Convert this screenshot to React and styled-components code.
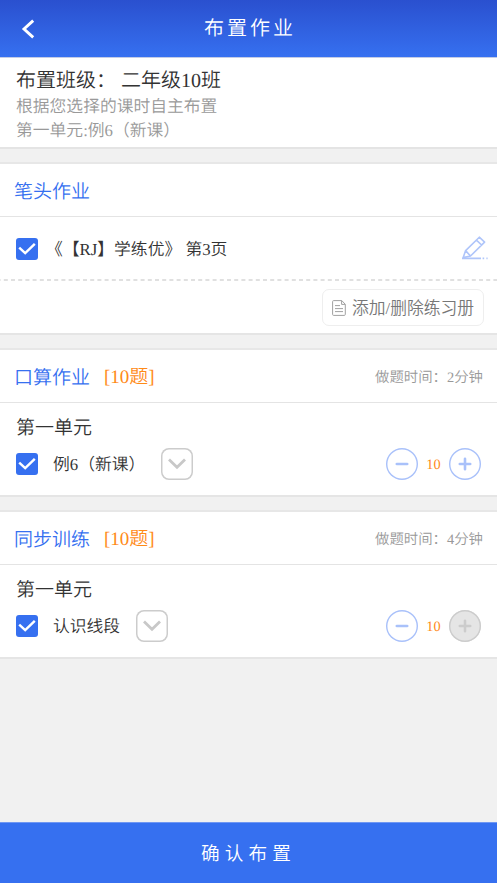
import styled, { createGlobalStyle } from "styled-components"
import { useState } from "react"

const exercises = [
    { title: "口算作业", minutes: 2, unit: "第一单元", lesson: "例6（新课）", count: 10, gap: 16 },
    { title: "同步训练", minutes: 4, unit: "第一单元", lesson: "认识线段", count: 10, gap: 16, full: true }
]

function Check(){
    const [ checked, setChecked ] = useState(true)

    return (
        <CheckBox $checked={checked} onClick={() => setChecked(!checked)}>
            {checked && <svg width="22" height="22" viewBox="0 0 22 22"><path d="M3.2 9.6 9.2 15.2 18.8 5.8" /></svg>}
        </CheckBox>
    )
}

function Exercise({ item }){
    const [ count, setCount ] = useState(item.count)

    return (
        <Section>
            <SectionHead>
                <h2>{item.title}</h2>
                <Total>[{count}题]</Total>
                <Time>做题时间：{item.minutes}分钟</Time>
            </SectionHead>
            <Body>
                <Unit>{item.unit}</Unit>
                <Lesson>
                    <Check/>
                    <LessonName $gap={item.gap}>{item.lesson}</LessonName>
                    <Expand>
                        <svg width="18" height="12" viewBox="0 0 18 12"><path d="M1 1.5 9 9.2 17 1.5" /></svg>
                    </Expand>
                    <Stepper>
                        <Round onClick={() => setCount(count - 1)}>
                            <svg width="14" height="14" viewBox="0 0 14 14"><path d="M1.8 7H12.2" /></svg>
                        </Round>
                        <span>{count}</span>
                        <Round $disabled={item.full} disabled={item.full} onClick={() => setCount(count + 1)}>
                            <svg width="14" height="14" viewBox="0 0 14 14"><path d="M1.8 7H12.2M7 1.8V12.2" /></svg>
                        </Round>
                    </Stepper>
                </Lesson>
            </Body>
        </Section>
    )
}

export default function App(){
    return (
        <>
            <GlobalStyle/>
            <Page lang="zh-CN">
                <Header>
                    <Back>
                        <svg width="14" height="20" viewBox="0 0 14 20"><path d="M12.2 1.6 3 10 12.2 18.4" /></svg>
                    </Back>
                    <h1>布置作业</h1>
                </Header>
                <Info>
                    <h2>布置班级： 二年级10班</h2>
                    <p>根据您选择的课时自主布置</p>
                    <p>第一单元:例6（新课）</p>
                </Info>
                <Section>
                    <SectionHead>
                        <h2>笔头作业</h2>
                    </SectionHead>
                    <BookRow>
                        <Check/>
                        <BookName>《【RJ】学练优》 第3页</BookName>
                        <Edit>
                            <svg width="28" height="26" viewBox="0 0 28 26">
                                <path d="M2.2 21.6 4.6 14.6 18.3 1.2 23.6 6.1 9.5 20 2.2 21.6ZM4.6 14.6 9.5 20M15.4 4.1 20.6 9" />
                                <path d="M1 22.4H20M21.6 22.4H23.2M25.4 22.4H26.6" />
                            </svg>
                        </Edit>
                    </BookRow>
                    <Dashes width="100%" height="2"><path d="M-3.4 1H500" /></Dashes>
                    <AddRow>
                        <AddButton>
                            <svg width="14" height="16" viewBox="0 0 14 16">
                                <path d="M1.6.6H9.8L13.3 4.3V14.4Q13.3 15.4 12.3 15.4H1.6Q.6 15.4.6 14.4V1.6Q.6.6 1.6.6ZM9.6.8V4.4H13.2M3 5.6H8M3 8.6H11M3 11.6H11" />
                            </svg>
                            <span>添加/删除练习册</span>
                        </AddButton>
                    </AddRow>
                </Section>
                {exercises.map((item) => <Exercise key={item.title} item={item}/>)}
                <Confirm>确认布置</Confirm>
            </Page>
        </>
    )
}

const GlobalStyle = createGlobalStyle`
    * {
        box-sizing: border-box;
    }

    body {
        margin: 0;
        font-family: 'Liberation Serif', 'Noto Sans CJK SC', serif;
        font-weight: 350;
        text-spacing-trim: space-all;
        text-rendering: geometricPrecision;
        color: #333333;
    }

    h1, h2, p {
        margin: 0;
        font-weight: inherit;
    }

    button {
        padding: 0;
        font-family: inherit;
        font-weight: inherit;
    }

    svg {
        display: block;
        fill: none;
        flex-shrink: 0;
    }
`

const Page = styled.div`
    display: flex;
    flex-direction: column;
    height: 883px;
    background: #F1F1F1;
`

const Header = styled.header`
    display: flex;
    align-items: center;
    height: 58px;
    flex-shrink: 0;
    background: linear-gradient(#2A50CF, #3670F0);
    border-bottom: 1px solid #C3CCE6;

    h1 {
        flex: 1;
        padding-right: 43px;
        padding-top: 1px;
        text-align: center;
        font-size: 20px;
        line-height: 30px;
        letter-spacing: 3px;
        text-indent: 3px;
        color: #FFFFFF;
    }
`

const Back = styled.button`
    width: 43px;
    padding-left: 21px;
    background: none;
    border: none;

    svg {
        stroke: #FFFFFF;
        stroke-width: 2.9;
    }
`

const Info = styled.div`
    height: 91px;
    padding: 9px 16px 0;
    flex-shrink: 0;
    background: #FFFFFF;
    border-bottom: 2px solid #E4E4E4;

    h2 {
        font-size: 20px;
        line-height: 28px;
    }

    p {
        font-size: 16.8px;
        line-height: 24px;
        color: #999999;
    }
`

const Section = styled.section`
    margin-top: 13px;
    flex-shrink: 0;
    background: #FFFFFF;
    border-top: 2px solid #E7E7E7;
    border-bottom: 2px solid #E5E5E5;
`

const SectionHead = styled.div`
    display: flex;
    align-items: center;
    height: 53px;
    padding: 2px 14px 0;
    border-bottom: 1px solid #E4E4E4;

    h2 {
        padding-top: 3px;
        font-size: 19px;
        line-height: 28px;
        color: #3670F0;
    }
`

const Total = styled.span`
    margin-left: 14px;
    padding-top: 2px;
    font-size: 19px;
    line-height: 28px;
    color: #FF8A17;
`

const Time = styled.span`
    margin-left: auto;
    padding-top: 2px;
    font-size: 14.4px;
    line-height: 20px;
    color: #999999;
`

const BookRow = styled.div`
    display: flex;
    align-items: center;
    height: 62px;
    padding: 1px 8px 0 16px;
`

const BookName = styled.span`
    margin-left: 8px;
    padding-top: 2px;
    font-size: 16.8px;
    line-height: 24px;
`

const Edit = styled.button`
    margin-left: auto;
    background: none;
    border: none;

    svg {
        stroke: #AFC5FA;
        stroke-width: 1.6;
        stroke-linejoin: round;
    }
`

const CheckBox = styled.div`
    width: 22px;
    height: 22px;
    flex-shrink: 0;
    border-radius: 3px;
    background: ${props => props.$checked ? "#3670F0" : "#DDDDDD"};

    svg {
        stroke: #FFFFFF;
        stroke-width: 2.4;
    }
`

const Dashes = styled.svg`
    stroke: #D6D6D6;
    stroke-width: 1.5;
    stroke-dasharray: 4 3.2;
`

const AddRow = styled.div`
    display: flex;
    justify-content: flex-end;
    height: 52px;
    padding: 8px 13px 0 0;
`

const AddButton = styled.button`
    display: flex;
    align-items: center;
    justify-content: center;
    gap: 6px;
    width: 162px;
    height: 37px;
    background: #FFFFFF;
    border: 1px solid #EEEEEE;
    border-radius: 7px;
    font-size: 16.8px;
    line-height: 24px;
    color: #777777;

    span {
        padding-top: 2px;
    }

    svg {
        stroke: #A0A0A0;
        stroke-width: 1;
    }
`

const Body = styled.div`
    height: 92px;
    padding: 11px 16px 0;
`

const Unit = styled.p`
    font-size: 19px;
    line-height: 30px;
`

const Lesson = styled.div`
    display: flex;
    align-items: center;
    height: 32px;
    margin-top: 4px;
`

const LessonName = styled.span`
    margin-left: 15px;
    margin-right: ${props => props.$gap}px;
    padding-top: 2px;
    font-size: 16.8px;
    line-height: 24px;
`

const Expand = styled.button`
    display: flex;
    align-items: center;
    justify-content: center;
    width: 32px;
    height: 32px;
    background: #FFFFFF;
    border: none;
    box-shadow: inset 0 0 0 1.5px #CCCCCC;
    border-radius: 8px;

    svg {
        stroke: #C8C8C8;
        stroke-width: 2.8;
    }
`

const Stepper = styled.div`
    display: flex;
    align-items: center;
    margin-left: auto;

    span {
        width: 31px;
        padding-top: 2px;
        text-align: center;
        font-size: 14.4px;
        color: #FF8A17;
    }
`

const Round = styled.button`
    display: flex;
    align-items: center;
    justify-content: center;
    width: 32px;
    height: 32px;
    border-radius: 50%;
    background: ${props => props.$disabled ? "#E5E5E5" : "#FFFFFF"};
    box-shadow: inset 0 0 0 1.4px ${props => props.$disabled ? "#CCCCCC" : "#A9C1FA"};
    border: none;

    svg {
        stroke: ${props => props.$disabled ? "#CCCCCC" : "#A9C1FA"};
        stroke-width: 2.6;
        stroke-linecap: round;
    }
`

const Confirm = styled.button`
    height: 61px;
    margin-top: auto;
    padding-bottom: 3px;
    flex-shrink: 0;
    background: #3670F0;
    border: none;
    border-top: 1px solid #6F97F3;
    font-size: 18.6px;
    letter-spacing: 5.1px;
    color: #FFFFFF;
`
